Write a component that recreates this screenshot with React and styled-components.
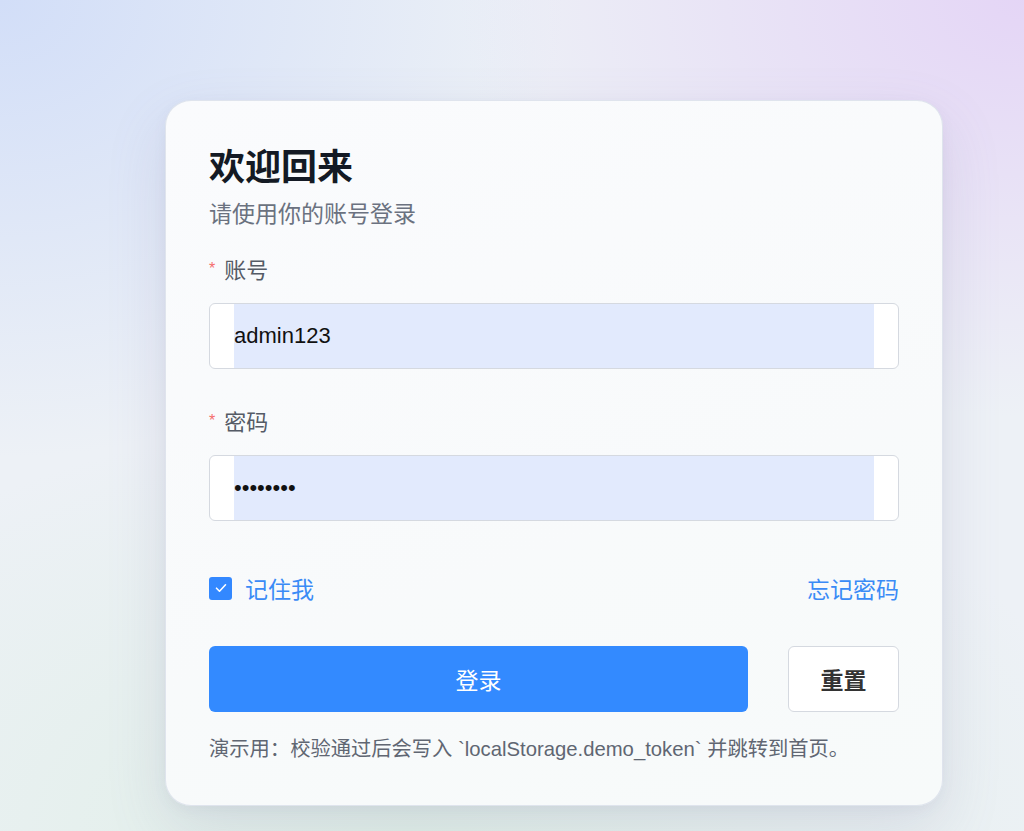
import styled, { createGlobalStyle } from 'styled-components';

const Global = createGlobalStyle`
  html, body {
    margin: 0;
    padding: 0;
  }
  body {
    font-family: "Liberation Sans", "Noto Sans CJK SC", sans-serif;
    -webkit-font-smoothing: antialiased;
  }
  * {
    box-sizing: border-box;
  }
`;

const App = () => (
  <>
    <Global />
    <Page>
      <Card>
        <Title>欢迎回来</Title>
        <Subtitle>请使用你的账号登录</Subtitle>

        <Label><Star>*</Star>账号</Label>
        <Field>
          <Input type="text" defaultValue="admin123" />
        </Field>

        <Label $gap={39}><Star>*</Star>密码</Label>
        <Field>
          <Input type="password" defaultValue="12345678" />
        </Field>

        <Options>
          <Remember>
            <Check>
              <svg width="14" height="14" viewBox="0 0 14 14" fill="none">
                <path d="M2.5 7.2l3 3 6-6.4" stroke="#fff" strokeWidth="1.6" strokeLinecap="round" strokeLinejoin="round" />
              </svg>
            </Check>
            记住我
          </Remember>
          <LinkText>忘记密码</LinkText>
        </Options>

        <Actions>
          <Primary>登录</Primary>
          <Secondary>重置</Secondary>
        </Actions>

        <Note>演示用：校验通过后会写入 `localStorage.demo_token` 并跳转到首页。</Note>
      </Card>
    </Page>
  </>
);

const Page = styled.div`
  width: 100%;
  min-height: 831px;
  padding: 100px 0 26px 165px;
  background:
    radial-gradient(ellipse 55% 50% at 100% 0%, rgba(228, 212, 246, 0.95), rgba(228, 212, 246, 0) 100%),
    radial-gradient(ellipse 55% 55% at 0% 0%, rgba(210, 222, 248, 1), rgba(210, 222, 248, 0) 100%),
    radial-gradient(ellipse 70% 50% at 40% 100%, rgba(224, 239, 231, 1), rgba(224, 239, 231, 0) 100%),
    #edf1f6;
`;

const Card = styled.div`
  width: 778px;
  display: flex;
  flex-direction: column;
  padding: 45px 43px 43px;
  border-radius: 26px;
  border: 1px solid rgba(220, 225, 235, 0.9);
  background: linear-gradient(160deg, #fafbfd 0%, #f8fafb 60%, #f7fafa 100%);
  box-shadow: 0 24px 60px rgba(120, 110, 160, 0.16), 0 4px 14px rgba(100, 110, 140, 0.06);
`;

const Title = styled.h1`
  margin: 0;
  font-size: 36px;
  line-height: 44px;
  font-weight: 700;
  color: #141a24;
`;

const Subtitle = styled.p`
  margin: 9px 0 0;
  font-size: 23px;
  line-height: 30px;
  color: #6b7280;
`;

const Label = styled.div`
  margin-top: ${p => p.$gap ?? 27}px;
  display: flex;
  align-items: center;
  font-size: 22px;
  line-height: 30px;
  color: #555b66;
`;

const Star = styled.span`
  color: #f56c6c;
  font-size: 16px;
  margin-right: 9px;
  position: relative;
  top: -2px;
`;

const Field = styled.div`
  margin-top: 17px;
  height: 66px;
  padding: 0 24px;
  display: flex;
  background: #fff;
  border: 1px solid #d5d9e0;
  border-radius: 6px;
`;

const Input = styled.input`
  flex: 1;
  min-width: 0;
  height: 100%;
  border: none;
  outline: none;
  padding: 0;
  background: #e2eafd;
  font-family: "Liberation Sans", sans-serif;
  font-size: 22px;
  color: #111;
`;

const Options = styled.div`
  margin-top: 52px;
  display: flex;
  align-items: center;
  justify-content: space-between;
  height: 30px;
`;

const Remember = styled.label`
  display: flex;
  align-items: center;
  gap: 13px;
  font-size: 23px;
  color: #3a8bf6;
`;

const Check = styled.span`
  width: 23px;
  height: 23px;
  border-radius: 3px;
  background: #3388ff;
  display: flex;
  align-items: center;
  justify-content: center;
`;

const LinkText = styled.a`
  font-size: 23px;
  color: #3a8bf6;
  cursor: pointer;
`;

const Actions = styled.div`
  margin-top: 43px;
  display: flex;
  gap: 40px;
`;

const Primary = styled.button`
  flex: 1;
  height: 66px;
  border: none;
  border-radius: 6px;
  background: #338aff;
  color: #fff;
  font-family: inherit;
  font-size: 23px;
`;

const Secondary = styled.button`
  width: 111px;
  height: 66px;
  border: 1px solid #d5d9e0;
  border-radius: 6px;
  background: #fff;
  color: #333;
  font-family: inherit;
  font-size: 23px;
  font-weight: 700;
`;

const Note = styled.p`
  margin: 24px 0 0;
  font-size: 20.3px;
  line-height: 26px;
  color: #606672;
`;

export default App;
